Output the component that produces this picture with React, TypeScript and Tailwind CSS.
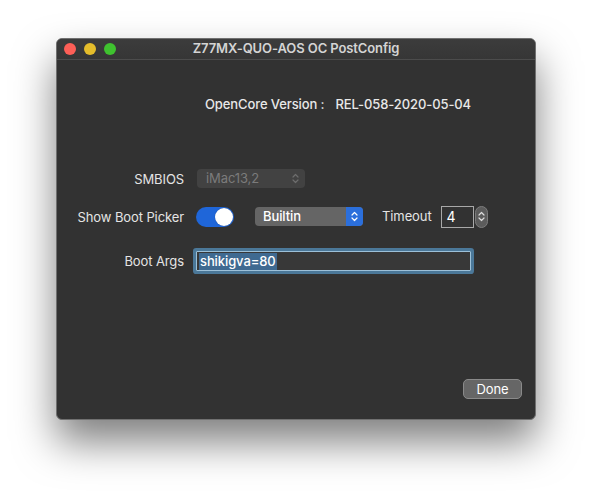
import React from 'react';

const font = { fontFamily: 'Inter, "Noto Sans", "Liberation Sans", sans-serif' };

// small up/down chevron pair used by popups and the stepper
const Chevrons: React.FC<{ color: string; className?: string }> = ({ color, className }) => (
  <svg width="7" height="11" viewBox="0 0 7 11" className={className} fill="none">
    <path d="M1 4 L3.5 1.5 L6 4" stroke={color} strokeWidth="1.2" strokeLinecap="round" strokeLinejoin="round" />
    <path d="M1 7 L3.5 9.5 L6 7" stroke={color} strokeWidth="1.2" strokeLinecap="round" strokeLinejoin="round" />
  </svg>
);

const Label: React.FC<{ children: React.ReactNode }> = ({ children }) => (
  <div className="w-[127px] shrink-0 text-right text-[13px] leading-4 text-[#e4e4e4]">{children}</div>
);

const App: React.FC = () => {
  return (
    <div className="w-[592px] h-[494px] bg-white pt-[38px] pl-[56px] overflow-hidden tracking-[-0.1px]" style={font}>
      <div className="w-[480px] h-[382px] rounded-[6px] border border-[#707070] bg-[#323232] shadow-[0_22px_40px_rgba(0,0,0,0.5)] flex flex-col overflow-hidden">
        {/* title bar */}
        <div className="relative h-[21px] shrink-0 border-b border-[#4c4c4c] bg-gradient-to-b from-[#3c3c3c] to-[#363636] flex items-center">
          <div className="flex gap-[8px] pl-[7px]">
            <span className="w-[12px] h-[12px] rounded-full bg-[#fe5f57]" />
            <span className="w-[12px] h-[12px] rounded-full bg-[#e5bd2b]" />
            <span className="w-[12px] h-[12px] rounded-full bg-[#3fc22f]" />
          </div>
          <div className="absolute inset-0 flex items-center justify-center text-[13px] font-semibold text-[#d4d4d4]">
            Z77MX-QUO-AOS OC PostConfig
          </div>
        </div>

        <div className="flex-1 flex flex-col">
          {/* version line */}
          <div className="mt-[36px] flex text-[13px] leading-4 text-[#e8e8e8] font-medium pl-[148px]">
            <span>OpenCore Version :</span>
            <span className="ml-[11px]">REL-058-2020-05-04</span>
          </div>

          {/* SMBIOS */}
          <div className="mt-[57px] flex items-center">
            <Label>SMBIOS</Label>
            <div className="ml-[13px] w-[108px] h-[19px] rounded-[4px] bg-[#424242] flex items-center justify-between pl-[9px] pr-[6px]">
              <span className="text-[13px] text-[#7b7b7b]">iMac13,2</span>
              <Chevrons color="#6d6d6d" />
            </div>
          </div>

          {/* boot picker */}
          <div className="mt-[18px] flex items-center h-[21px]">
            <Label>Show Boot Picker</Label>
            <div className="ml-[12px] w-[38px] h-[20px] rounded-full bg-[#1f66d9] flex items-center justify-end pr-[1px]">
              <span className="w-[18px] h-[18px] rounded-full bg-white shadow-[0_0_1px_rgba(0,0,0,0.4)]" />
            </div>
            <div className="ml-[21px] w-[108px] h-[19px] rounded-[4px] bg-[#656565] flex items-stretch overflow-hidden">
              <span className="flex-1 pl-[8px] text-[13px] leading-[19px] font-medium text-white">Builtin</span>
              <span className="w-[17px] bg-[#2b6fdc] flex items-center justify-center">
                <Chevrons color="#ffffff" />
              </span>
            </div>
            <span className="ml-[19px] text-[13px] text-[#e4e4e4]">Timeout</span>
            <div className="ml-[9px] w-[33px] h-[22px] border border-[#a8a8a8] bg-[#323232] flex items-center pl-[5px] text-[14px] text-white">
              4
            </div>
            <div className="ml-[1px] w-[13px] h-[22px] rounded-full bg-[#5c5c5c] border border-[#7c7c7c] flex items-center justify-center">
              <Chevrons color="#dcdcdc" />
            </div>
          </div>

          {/* boot args */}
          <div className="mt-[24px] flex items-center">
            <Label>Boot Args</Label>
            <div className="ml-[12px] w-[275px] h-[20px] border border-[#9cc0d8] bg-[#383838] ring-[3px] ring-[#4b7899] rounded-[1px] flex items-center pl-[2px]">
              <span className="bg-[#3f6a91] text-[13px] leading-[17px] font-medium text-white px-[1px]">shikigva=80</span>
            </div>
          </div>

          <div className="flex-1" />

          <div className="flex justify-end pr-[13px] pb-[20px]">
            <button className="w-[59px] h-[20px] rounded-[5px] bg-[#666666] border border-[#8a8a8a] text-[13px] leading-[18px] text-white">
              Done
            </button>
          </div>
        </div>
      </div>
    </div>
  );
};

export default App;
